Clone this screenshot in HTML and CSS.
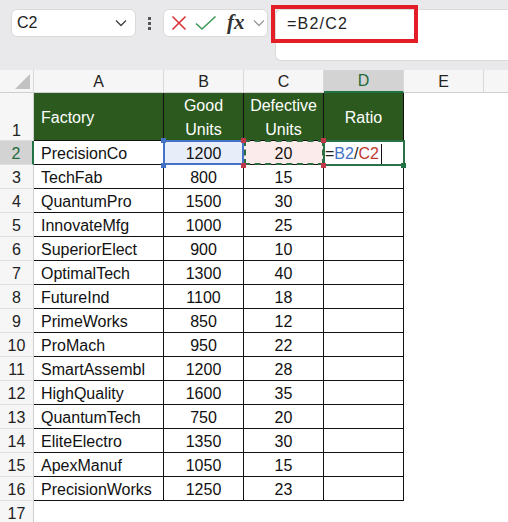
FILE: index.html
```html
<!DOCTYPE html>
<html>
<head>
<meta charset="utf-8">
<link rel="stylesheet" href="styles.css">
</head>
<body>
<div class="toolbar">
  <div class="namebox">
    <span class="ref">C2</span>
    <svg class="chev" width="12" height="8" viewBox="0 0 12 8"><path d="M1 1.5 L6 6.5 L11 1.5" fill="none" stroke="#444" stroke-width="1.4"/></svg>
  </div>
  <div class="dots"><i></i><i></i><i></i></div>
  <div class="fbuttons">
    <svg width="16" height="16" viewBox="0 0 16 16"><path d="M1.5 1.5 L14.5 14.5 M14.5 1.5 L1.5 14.5" stroke="#d9343a" stroke-width="1.6" fill="none"/></svg>
    <svg width="22" height="16" viewBox="0 0 22 16"><path d="M1 8.5 L7 14 L20.5 1.5" stroke="#3d9a56" stroke-width="1.6" fill="none"/></svg>
    <span class="fx">fx</span>
    <svg width="12" height="8" viewBox="0 0 12 8"><path d="M1 1.5 L6 6.5 L11 1.5" fill="none" stroke="#9a9a9a" stroke-width="1.3"/></svg>
  </div>
  <div class="formula">
    <span class="ftext">=B2/C2</span>
  </div>
  <div class="highlight"></div>
</div>

<div class="sheet">
  <div class="hd corner"><span class="tri"></span></div>
  <div class="hd">A</div><div class="hd">B</div><div class="hd">C</div><div class="hd active-col">D</div><div class="hd">E</div><div class="hd last"></div>

  <div class="rh r1">1</div>
  <div class="c th left">Factory</div><div class="c th">Good<br>Units</div><div class="c th">Defective<br>Units</div><div class="c th">Ratio</div><div class="e"></div><div class="e"></div>

  <div class="rh active-row">2</div>
  <div class="c left">PrecisionCo</div><div class="c selB">1200<span class="h hb tl"></span><span class="h hb bl"></span></div><div class="c selC">20<span class="h hr tl"></span><span class="h hr bl"></span><span class="h hr tr"></span><span class="h hr br"></span></div><div class="c selD"><span class="fb">B2</span><span class="slash">/</span><span class="fc">C2</span><span class="caret"></span><span class="h hg br"></span></div><div class="e"></div><div class="e"></div>

  <div class="rh">3</div><div class="c left">TechFab</div><div class="c">800</div><div class="c">15</div><div class="c"></div><div class="e"></div><div class="e"></div>
  <div class="rh">4</div><div class="c left">QuantumPro</div><div class="c">1500</div><div class="c">30</div><div class="c"></div><div class="e"></div><div class="e"></div>
  <div class="rh">5</div><div class="c left">InnovateMfg</div><div class="c">1000</div><div class="c">25</div><div class="c"></div><div class="e"></div><div class="e"></div>
  <div class="rh">6</div><div class="c left">SuperiorElect</div><div class="c">900</div><div class="c">10</div><div class="c"></div><div class="e"></div><div class="e"></div>
  <div class="rh">7</div><div class="c left">OptimalTech</div><div class="c">1300</div><div class="c">40</div><div class="c"></div><div class="e"></div><div class="e"></div>
  <div class="rh">8</div><div class="c left">FutureInd</div><div class="c">1100</div><div class="c">18</div><div class="c"></div><div class="e"></div><div class="e"></div>
  <div class="rh">9</div><div class="c left">PrimeWorks</div><div class="c">850</div><div class="c">12</div><div class="c"></div><div class="e"></div><div class="e"></div>
  <div class="rh">10</div><div class="c left">ProMach</div><div class="c">950</div><div class="c">22</div><div class="c"></div><div class="e"></div><div class="e"></div>
  <div class="rh">11</div><div class="c left">SmartAssembl</div><div class="c">1200</div><div class="c">28</div><div class="c"></div><div class="e"></div><div class="e"></div>
  <div class="rh">12</div><div class="c left">HighQuality</div><div class="c">1600</div><div class="c">35</div><div class="c"></div><div class="e"></div><div class="e"></div>
  <div class="rh">13</div><div class="c left">QuantumTech</div><div class="c">750</div><div class="c">20</div><div class="c"></div><div class="e"></div><div class="e"></div>
  <div class="rh">14</div><div class="c left">EliteElectro</div><div class="c">1350</div><div class="c">30</div><div class="c"></div><div class="e"></div><div class="e"></div>
  <div class="rh">15</div><div class="c left">ApexManuf</div><div class="c">1050</div><div class="c">15</div><div class="c"></div><div class="e"></div><div class="e"></div>
  <div class="rh">16</div><div class="c left">PrecisionWorks</div><div class="c">1250</div><div class="c">23</div><div class="c"></div><div class="e"></div><div class="e"></div>
  <div class="rh">17</div><div class="e"></div><div class="e"></div><div class="e"></div><div class="e"></div><div class="e"></div><div class="e"></div>
</div>
</body>
</html>
```

FILE: styles.css
```css
* { box-sizing: border-box; }
html, body { margin: 0; padding: 0; background: #fff; }
body {
  font-family: "Liberation Sans", Arial, sans-serif;
  color: #111;
  width: 508px;
  height: 522px;
  overflow: hidden;
}

.toolbar {
  position: relative;
  height: 70px;
  background: #e9e8ea;
  display: flex;
  align-items: flex-start;
  padding: 9px 0 0 11px;
}
.namebox {
  width: 125px;
  height: 28px;
  background: #fff;
  border: 1px solid #dadada;
  border-radius: 6px;
  display: flex;
  align-items: center;
  justify-content: space-between;
  padding: 0 8px 0 5px;
  font-size: 16px;
  color: #222;
}
.dots {
  width: 27px;
  height: 28px;
  display: flex;
  flex-direction: column;
  align-items: center;
  justify-content: center;
  gap: 2px;
}
.dots i {
  display: block;
  width: 3px;
  height: 3px;
  background: #555;
}
.fbuttons {
  width: 105px;
  height: 28px;
  background: #fff;
  border: 1px solid #dadada;
  border-radius: 6px;
  display: flex;
  align-items: center;
  gap: 8px;
  padding-left: 7px;
  overflow: hidden;
}
.fx {
  font-family: "Liberation Serif", "Times New Roman", serif;
  font-style: italic;
  font-weight: bold;
  font-size: 21px;
  color: #333;
  line-height: 1;
  margin-left: 2px;
  margin-top: -2px;
}
.formula {
  margin-left: 7px;
  flex: 1;
  height: 52px;
  background: #fff;
  border: 1px solid #dadada;
  border-right: none;
  border-radius: 6px 0 0 6px;
  padding: 5px 0 0 11px;
  font-size: 16px;
  letter-spacing: 1.2px;
  color: #222;
}
.highlight {
  position: absolute;
  left: 271px;
  top: 5px;
  width: 147px;
  height: 38px;
  border: 4px solid #e31e27;
}

.sheet {
  display: grid;
  grid-template-columns: 34px 130px 80px 80px 80px 80px 1fr;
  grid-template-rows: 23px 48px repeat(16, 24px);
  font-size: 16px;
}
.hd {
  background: #f6f6f6;
  border-right: 1px solid #d9d9d9;
  border-bottom: 1px solid #cfcfcf;
  display: flex;
  align-items: center;
  justify-content: center;
  color: #222;
  font-size: 16px;
  padding-top: 1px;
}
.hd.last { border-right: none; }
.corner { position: relative; }
.tri {
  position: absolute;
  right: 3px;
  bottom: 3px;
  width: 15px;
  height: 15px;
  background: #c2c2c2;
  clip-path: polygon(100% 0, 100% 100%, 0 100%);
}
.hd.active-col {
  background: #d3d3d3;
  color: #1e6b3c;
  border-bottom: 2px solid #217346;
}
.rh {
  background: #f6f6f6;
  border-right: 1px solid #cfcfcf;
  border-bottom: 1px solid #dedede;
  display: flex;
  align-items: center;
  justify-content: center;
  color: #222;
  padding-top: 3px;
}
.rh.r1 { align-items: flex-end; padding-bottom: 0; }
.rh.active-row {
  background: #d3d3d3;
  color: #1e6b3c;
  border-right: 2px solid #217346;
}
.c {
  position: relative;
  border-right: 1px solid #111;
  border-bottom: 1px solid #111;
  display: flex;
  align-items: center;
  justify-content: center;
  padding-top: 3px;
  white-space: nowrap;
}
.c.left { justify-content: flex-start; padding-left: 7px; }
.c.th {
  background: #2c5a1e;
  color: #fff;
  text-align: center;
  line-height: 24px;
  padding-top: 3px;
}
.c.th.left { padding-left: 7px; }
.e { background: #fff; }

.selB { background: #e7eef9; }
.selB::after {
  content: "";
  position: absolute;
  left: -1px; top: -1px; right: -1px; bottom: -1px;
  border: 2px solid #4472c4;
}
.selC { background: #fbeceb; }
.selC::after {
  content: "";
  position: absolute;
  left: 0; top: -1px; right: -1px; bottom: -1px;
  border: 2px dashed #2f6b3f;
}
.selD {
  justify-content: flex-start;
  padding-left: 1px;
}
.selD::before {
  content: "=";
  color: #222;
}
.selD::after {
  content: "";
  position: absolute;
  left: -1px; top: -1px; right: -2px; bottom: -2px;
  border: 2px solid #2a7148;
}
.fb { color: #4472c4; }
.slash { color: #222; }
.fc { color: #c0392b; }
.caret {
  display: inline-block;
  width: 1px;
  height: 21px;
  background: #111;
  margin-left: 2px;
}
.h {
  position: absolute;
  width: 5px;
  height: 5px;
  z-index: 2;
}
.h.tl { left: -3px; top: -3px; }
.h.bl { left: -3px; bottom: -4px; }
.h.tr { right: -3px; top: -3px; }
.h.br { right: -3px; bottom: -4px; }
.hb { background: #4472c4; }
.hr { background: #c0394a; }
.hg { background: #217346; right: -4px; }
```
